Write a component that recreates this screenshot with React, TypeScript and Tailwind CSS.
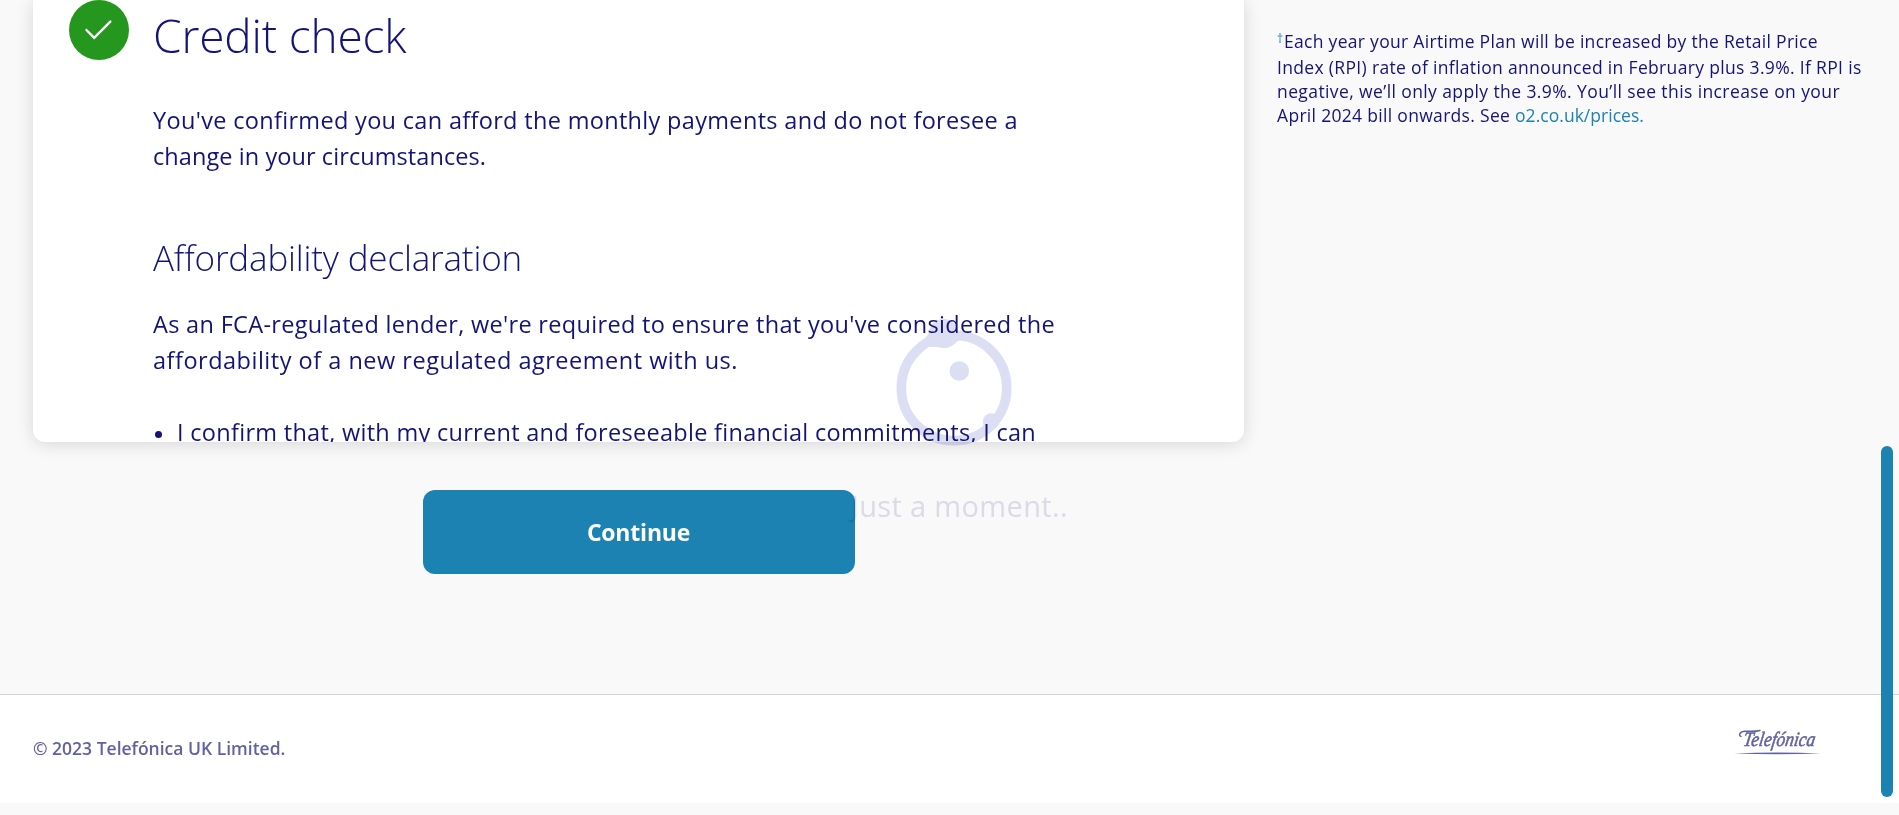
import type { ReactNode } from "react";

function Line({ className, children }: { className: string; children: ReactNode }) {
  return <span className={`block whitespace-pre ${className}`}>{children}</span>;
}

function CheckBadge() {
  return (
    <svg className="h-[60px] w-[60px] shrink-0" viewBox="0 0 60 60" fill="none">
      <circle cx="30" cy="30" r="30" fill="#25961e" />
      <path d="M17.4 30 25.2 37.8 41.3 21.6" stroke="#fff" strokeWidth="2.4" strokeLinecap="round" />
    </svg>
  );
}

function CreditCheckCard() {
  return (
    <section className="flex h-[442px] w-[1211px] items-start gap-6 overflow-hidden rounded-b-xl bg-white pl-9 shadow-[0_2px_18px_rgba(0,0,0,0.14)]">
      <CheckBadge />
      <div className="pt-[7px] text-[23.5px] leading-9">
        <h1 className="text-[46px] leading-[56px] font-[340] tracking-[-0.15px] whitespace-pre">Credit check</h1>
        <p className="mt-[39px]">
          <Line className="tracking-[0.323px]">You've confirmed you can afford the monthly payments and do not foresee a</Line>
          <Line className="tracking-[0.078px]">change in your circumstances.</Line>
        </p>
        <h2 className="mt-[62px] text-[35px] leading-[44px] font-light tracking-[-0.164px] whitespace-pre">Affordability declaration</h2>
        <p className="mt-[26px]">
          <Line className="tracking-[0.32px]">As an FCA-regulated lender, we're required to ensure that you've considered the</Line>
          <Line className="tracking-[0.506px]">affordability of a new regulated agreement with us.</Line>
        </p>
        <ul className="mt-9">
          <li className="flex">
            <span className="flex h-9 w-6 items-center pt-[4px] pl-0.5">
              <span className="h-[7px] w-[7px] rounded-full bg-[#141478]" />
            </span>
            <Line className="tracking-[0.295px]">I confirm that, with my current and foreseeable financial commitments, I can</Line>
          </li>
        </ul>
      </div>
    </section>
  );
}

function PriceNote() {
  return (
    <aside className="pt-[28px] pl-[33px] text-[17.5px] leading-6">
      <div className="flex h-[27px]">
        <span className="w-[7px] text-[12px] leading-[22px] text-[#1c82b2]">†</span>
        <Line className="leading-[26px] tracking-[0.3px]">Each year your Airtime Plan will be increased by the Retail Price</Line>
      </div>
      <Line className="tracking-[0.33px]">Index (RPI) rate of inflation announced in February plus 3.9%. If RPI is</Line>
      <Line className="tracking-[0.4px]">negative, we’ll only apply the 3.9%. You’ll see this increase on your</Line>
      <Line className="tracking-[0.31px]">
        April 2024 bill onwards. See <a className="tracking-[0.03px] text-[#1c82b2]">o2.co.uk/prices.</a>
      </Line>
    </aside>
  );
}

function TelefonicaLogo() {
  return (
    <svg className="h-[30px] w-[90px]" viewBox="0 0 90 30" fill="none">
      <path d="M8 9.400C5.200 8.600 6.600 4.400 12 4.200 17 4 21.500 4.800 27 3.400" stroke="#6262a2" strokeWidth="1.5" strokeLinecap="round" />
      <text x="0" y="0" transform="translate(9.500 19) skewX(-9)" textLength="72" lengthAdjust="spacingAndGlyphs" fontFamily="Liberation Serif, serif" fontStyle="italic" fontSize="20.5" fill="#6262a2" stroke="#6262a2" strokeWidth="0.55">
        Telefónica
      </text>
      <path d="M1 26.400 Q44 24.800 88 26.400 Q44 28 1 26.400Z" fill="#6262a2" />
    </svg>
  );
}

function LoadingOverlay() {
  return (
    <div className="pointer-events-none absolute top-[310px] left-[851px] w-[220px] mix-blend-multiply">
      <svg className="ml-[39px] h-[140px] w-[130px]" viewBox="890 310 130 140" fill="#dcdff3">
        <circle cx="954" cy="388" r="52.7" fill="none" stroke="#dcdff3" strokeWidth="9.6" />
        <circle cx="943.5" cy="333.5" r="14.5" />
        <path d="M930 331Q926 339 918 343L931 347Q937 346 943.5 348Q952 347.500 957 341.500L967 337Q958 335 956 328Z" />
        <circle cx="959.3" cy="371" r="9.8" />
        <circle cx="991" cy="421.500" r="8.2" />
      </svg>
      <p className="mt-[38px] text-[29px] leading-9 font-medium tracking-[0.35px] whitespace-pre text-[#e2e0ec]">Just a moment..</p>
    </div>
  );
}

export default function App() {
  return (
    <div className="relative flex h-[815px] w-[1899px] flex-col overflow-hidden bg-[#f9f9f9] font-['Open_Sans',sans-serif] text-[#141478]">
      <main className="flex h-[694px] items-start pl-[33px]">
        <div className="flex w-[1211px] flex-col items-center gap-12">
          <CreditCheckCard />
          <button className="h-[84px] w-[432px] rounded-xl bg-[#1c82b2] text-[23px] font-bold tracking-[-0.2px] text-white">Continue</button>
        </div>
        <PriceNote />
      </main>
      <footer className="flex h-[109px] items-start justify-between border-t border-[#d4d4d6] bg-white pr-[76px] pl-[33px]">
        <p className="pt-[41px] text-[17.5px] leading-6 font-semibold whitespace-pre text-[#6262a2]">© 2023 Telefónica UK Limited.</p>
        <div className="pt-8">
          <TelefonicaLogo />
        </div>
      </footer>
      <LoadingOverlay />
      <div className="absolute top-[446px] right-1.5 h-[351px] w-3 rounded-full bg-[#1c82b2]" />
    </div>
  );
}
